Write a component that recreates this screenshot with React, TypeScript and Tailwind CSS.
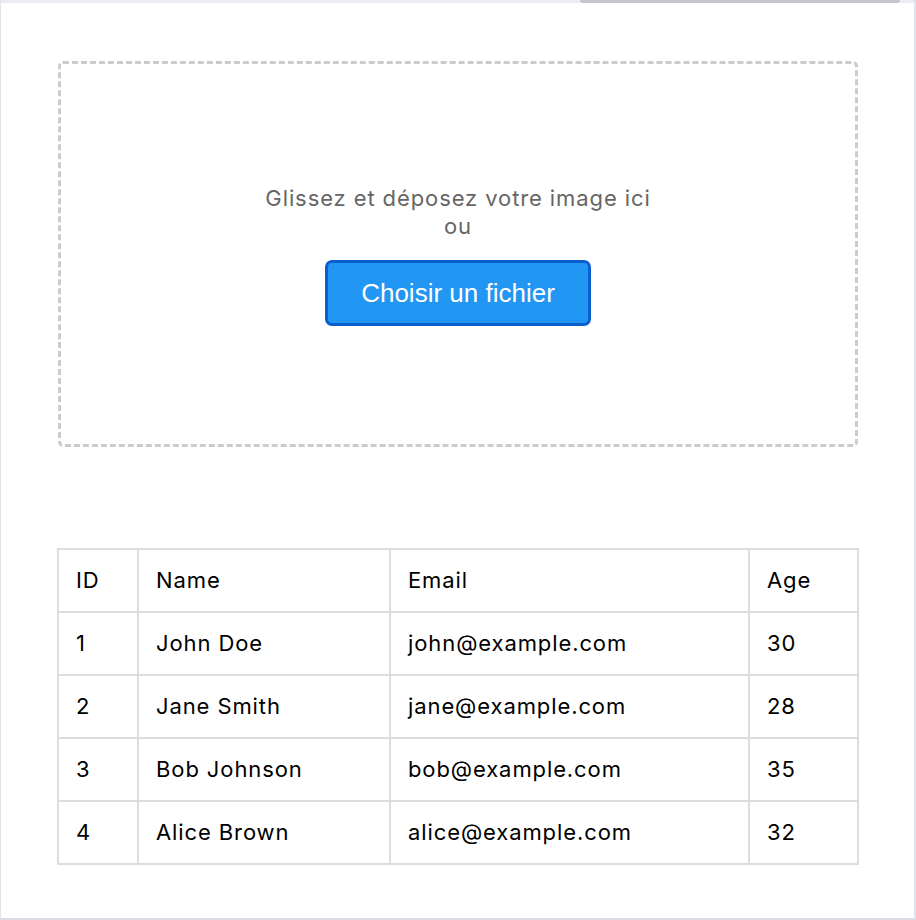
import React from "react";

const rows = [
  { id: 1, name: "John Doe", email: "john@example.com", age: 30 },
  { id: 2, name: "Jane Smith", email: "jane@example.com", age: 28 },
  { id: 3, name: "Bob Johnson", email: "bob@example.com", age: 35 },
  { id: 4, name: "Alice Brown", email: "alice@example.com", age: 32 },
];

export default function App() {
  return (
    <div className="w-[916px] h-[920px] bg-white relative" style={{ fontFamily: "Inter, 'Liberation Sans', sans-serif" }}>
      <div className="absolute left-0 top-0 w-full h-[3px] bg-[#ebebf2]" />
      <div className="absolute left-[580px] top-0 w-[320px] h-[3px] bg-[#c4c4cc] rounded-b-full" />
      <div className="absolute left-0 top-0 w-[1px] h-full bg-[#e2e2ea]" />
      <div className="absolute right-0 top-0 w-[2px] h-full bg-[#e2e2ea]" />
      <div className="absolute left-0 bottom-0 w-full h-[2px] bg-[#dcdce4]" />
      <div className="pt-[61px] flex flex-col items-center">
        <div className="w-[800px] h-[386px] border-[3px] border-dashed border-[#cccccc] rounded-[5px] flex flex-col items-center justify-center">
          <p className="text-[22px] leading-[28px] tracking-[0.9px] text-[#666666] mt-[2px]">Glissez et déposez votre image ici</p>
          <p className="text-[22px] leading-[28px] tracking-[0.9px] text-[#666666]">ou</p>
          <button
            className="mt-[20px] w-[266px] h-[66px] bg-[#2196f3] border-[3px] border-[#0a5fcc] rounded-[7px] text-white text-[26px]"
            style={{ fontFamily: "'Liberation Sans', Arial, sans-serif" }}
          >
            Choisir un fichier
          </button>
        </div>
        <table className="mt-[101px] w-[800px] border-collapse border-2 border-[#dddddd] text-[22px] tracking-[0.9px] text-black table-fixed">
          <colgroup>
            <col className="w-[80px]" />
            <col className="w-[252px]" />
            <col className="w-[359px]" />
            <col className="w-[109px]" />
          </colgroup>
          <thead>
            <tr className="h-[63px]">
              {["ID", "Name", "Email", "Age"].map((h) => (
                <th key={h} className="border-2 border-[#dddddd] pl-[17px] pr-[16px] text-left font-normal">
                  {h}
                </th>
              ))}
            </tr>
          </thead>
          <tbody>
            {rows.map((r) => (
              <tr key={r.id} className="h-[63px]">
                <td className="border-2 border-[#dddddd] pl-[17px] pr-[16px]">{r.id}</td>
                <td className="border-2 border-[#dddddd] pl-[17px] pr-[16px]">{r.name}</td>
                <td className="border-2 border-[#dddddd] pl-[17px] pr-[16px]">{r.email}</td>
                <td className="border-2 border-[#dddddd] pl-[17px] pr-[16px]">{r.age}</td>
              </tr>
            ))}
          </tbody>
        </table>
      </div>
    </div>
  );
}
